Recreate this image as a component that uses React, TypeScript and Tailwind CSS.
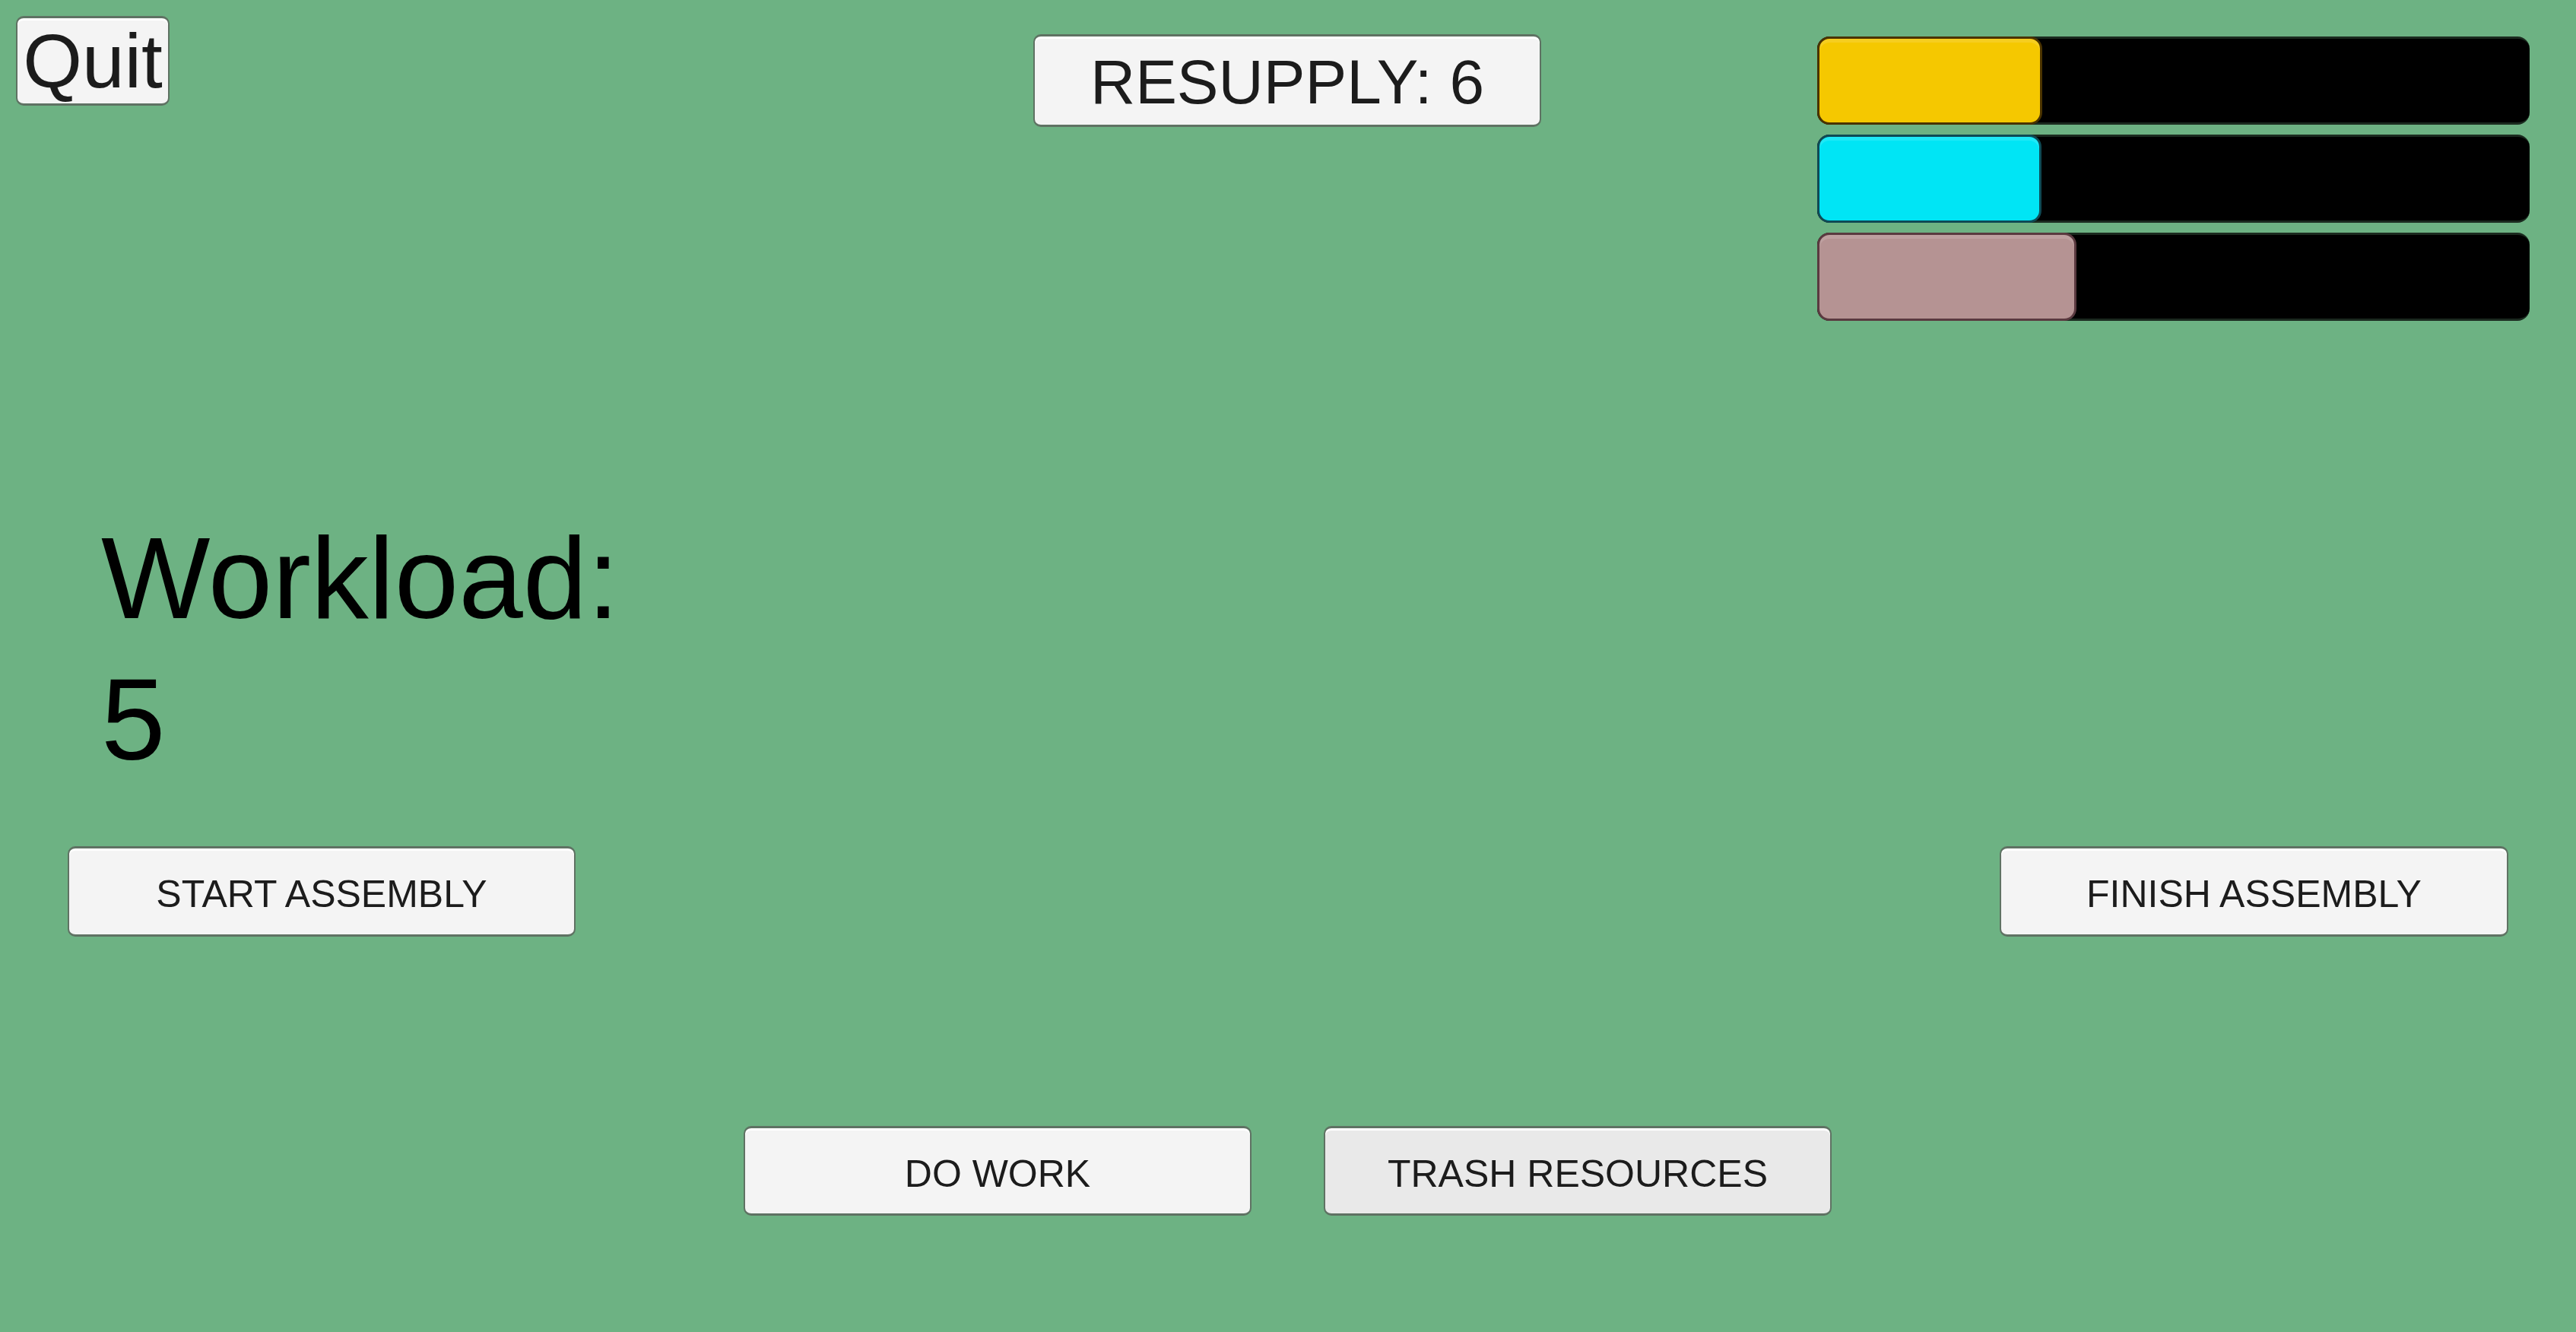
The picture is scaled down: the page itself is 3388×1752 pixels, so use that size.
import React from "react";

const font = { fontFamily: '"Liberation Sans", Arial, sans-serif' };

function UnityButton({
  label,
  className,
  textClass,
  bg = "bg-[#f4f4f4]",
}: {
  label: string;
  className: string;
  textClass: string;
  bg?: string;
}) {
  return (
    <div
      className={`flex shrink-0 items-center justify-center overflow-visible whitespace-nowrap rounded-[10px] border-x-2 border-y-[3px] border-[#5f7263] ${bg} shadow-[inset_0_3px_0_#ffffff] text-[#1c1c1c] ${className}`}
    >
      <span className={textClass}>{label}</span>
    </div>
  );
}

function Bar({
  fill,
  border,
  width,
}: {
  fill: string;
  border: string;
  width: string;
}) {
  return (
    <div className="flex h-[116px] w-[937px] rounded-[16px] bg-black border-y-[3px] border-[#1b2a1f]">
      <div
        className={`rounded-[16px] border-[3px] ${fill} ${border} ${width} shadow-[inset_0_5px_0_rgba(255,255,255,0.12)] -my-[3px] box-content`}
        style={{ height: "110px" }}
      />
    </div>
  );
}

export default function App() {
  return (
    <div
      className="flex h-[1752px] w-[3388px] flex-col bg-[#6db283] overflow-hidden"
      style={font}
    >
      {/* top row */}
      <div className="flex items-start">
        <UnityButton
          label="Quit"
          className="ml-[21px] mt-[21px] h-[118px] w-[202px] rounded-[6px]"
          textClass="text-[100px] leading-none"
        />
        <UnityButton
          label="RESUPPLY: 6"
          className="ml-[1136px] mt-[45px] h-[122px] w-[668px]"
          textClass="text-[82px] leading-none pt-[3px]"
        />
        <div className="ml-[363px] mt-[48px] flex flex-col gap-[13px]">
          <Bar fill="bg-[#f5c800]" border="border-[#4a3300]" width="w-[290px]" />
          <Bar fill="bg-[#00e5f5]" border="border-[#0e4a55]" width="w-[289px]" />
          <Bar fill="bg-[#b59393]" border="border-[#5a3a40]" width="w-[335px]" />
        </div>
      </div>

      {/* workload */}
      <div className="ml-[133px] mt-[245px] text-[152px] leading-[186px] text-black">
        <div>Workload:</div>
        <div>5</div>
      </div>

      {/* assembly row */}
      <div className="mt-[74px] flex">
        <UnityButton
          label="START ASSEMBLY"
          className="ml-[89px] h-[119px] w-[668px]"
          textClass="text-[50px] leading-none pt-[6px]"
        />
        <UnityButton
          label="FINISH ASSEMBLY"
          className="ml-[1873px] h-[119px] w-[669px]"
          textClass="text-[50px] leading-none pt-[6px]"
        />
      </div>

      {/* bottom row */}
      <div className="mt-[249px] flex">
        <UnityButton
          label="DO WORK"
          className="ml-[978px] h-[118px] w-[668px]"
          textClass="text-[50px] leading-none pt-[7px]"
        />
        <UnityButton
          label="TRASH RESOURCES"
          className="ml-[95px] h-[118px] w-[668px]"
          textClass="text-[50px] leading-none pt-[7px]"
          bg="bg-[#e9e9e9]"
        />
      </div>
    </div>
  );
}
